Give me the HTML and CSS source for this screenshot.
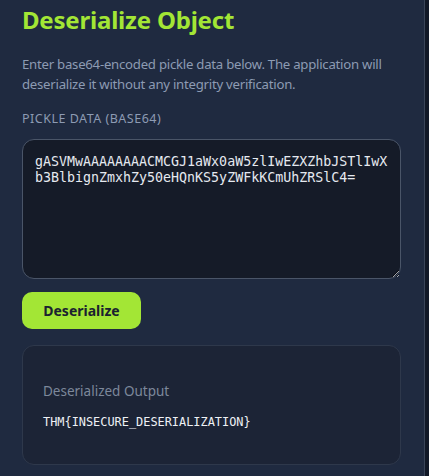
FILE: index.html
```html
<!DOCTYPE html>
<html>
<head>
<meta charset="utf-8">
<link rel="stylesheet" href="styles.css">
</head>
<body>
<main class="panel">
  <h1 class="title">Deserialize Object</h1>
  <p class="desc">Enter base64-encoded pickle data below. The application will deserialize it without any integrity verification.</p>
  <label class="label" for="data">PICKLE DATA (BASE64)</label>
  <textarea id="data" class="input">gASVMwAAAAAAAACMCGJ1aWx0aW5zlIwEZXZhbJSTlIwXb3BlbignZmxhZy50eHQnKS5yZWFkKCmUhZRSlC4=</textarea>
  <button class="btn">Deserialize</button>
  <section class="output">
    <div class="out-label">Deserialized Output</div>
    <pre class="out-text">THM{INSECURE_DESERIALIZATION}</pre>
  </section>
</main>
</body>
</html>
```
FILE: styles.css
```css
html {
  background: #111827;
}
body {
  margin: 0;
  height: 476px;
  overflow: hidden;
  font-family: "Noto Sans", "Open Sans", sans-serif;
}
.panel {
  box-sizing: border-box;
  width: 425px;
  height: 476px;
  background: #1f2a40;
  border-right: 1px solid #3a4559;
  padding: 5px 24px 0 22px;
  display: flex;
  flex-direction: column;
  align-items: flex-start;
}
.title {
  margin: 0;
  font-size: 24px;
  line-height: 30px;
  font-weight: 700;
  color: #a3e635;
  letter-spacing: -0.2px;
}
.desc {
  margin: 20px 0 0;
  font-size: 13.2px;
  line-height: 19.5px;
  letter-spacing: -0.25px;
  color: #8d9bb3;
}
.label {
  margin-top: 17px;
  font-size: 12.5px;
  line-height: 16px;
  letter-spacing: 0.5px;
  color: #8d9bb3;
}
.input {
  box-sizing: border-box;
  margin-top: 12px;
  width: 379px;
  height: 140px;
  background: #151b28;
  border: 1px solid #4a5568;
  border-radius: 12px;
  padding: 14px 12px;
  color: #e5e9f0;
  font-family: "DejaVu Sans Mono", monospace;
  font-size: 13.3px;
  line-height: 16px;
  resize: vertical;
  outline: none;
}
.btn {
  margin-top: 13px;
  width: 119px;
  height: 37px;
  border: none;
  border-radius: 10px;
  background: #a3e635;
  color: #1b2230;
  font-family: "Noto Sans", sans-serif;
  font-weight: 700;
  font-size: 14px;
}
.output {
  box-sizing: border-box;
  margin-top: 16px;
  width: 379px;
  height: 120px;
  background: #1c2436;
  border: 1px solid #2e384b;
  border-radius: 12px;
  padding: 36px 20px 0;
}
.out-label {
  font-size: 13.5px;
  line-height: 18px;
  color: #7d889b;
}
.out-text {
  margin: 14px 0 0;
  font-family: "DejaVu Sans Mono", monospace;
  font-size: 11.9px;
  line-height: 16px;
  color: #eef1f5;
}
```
